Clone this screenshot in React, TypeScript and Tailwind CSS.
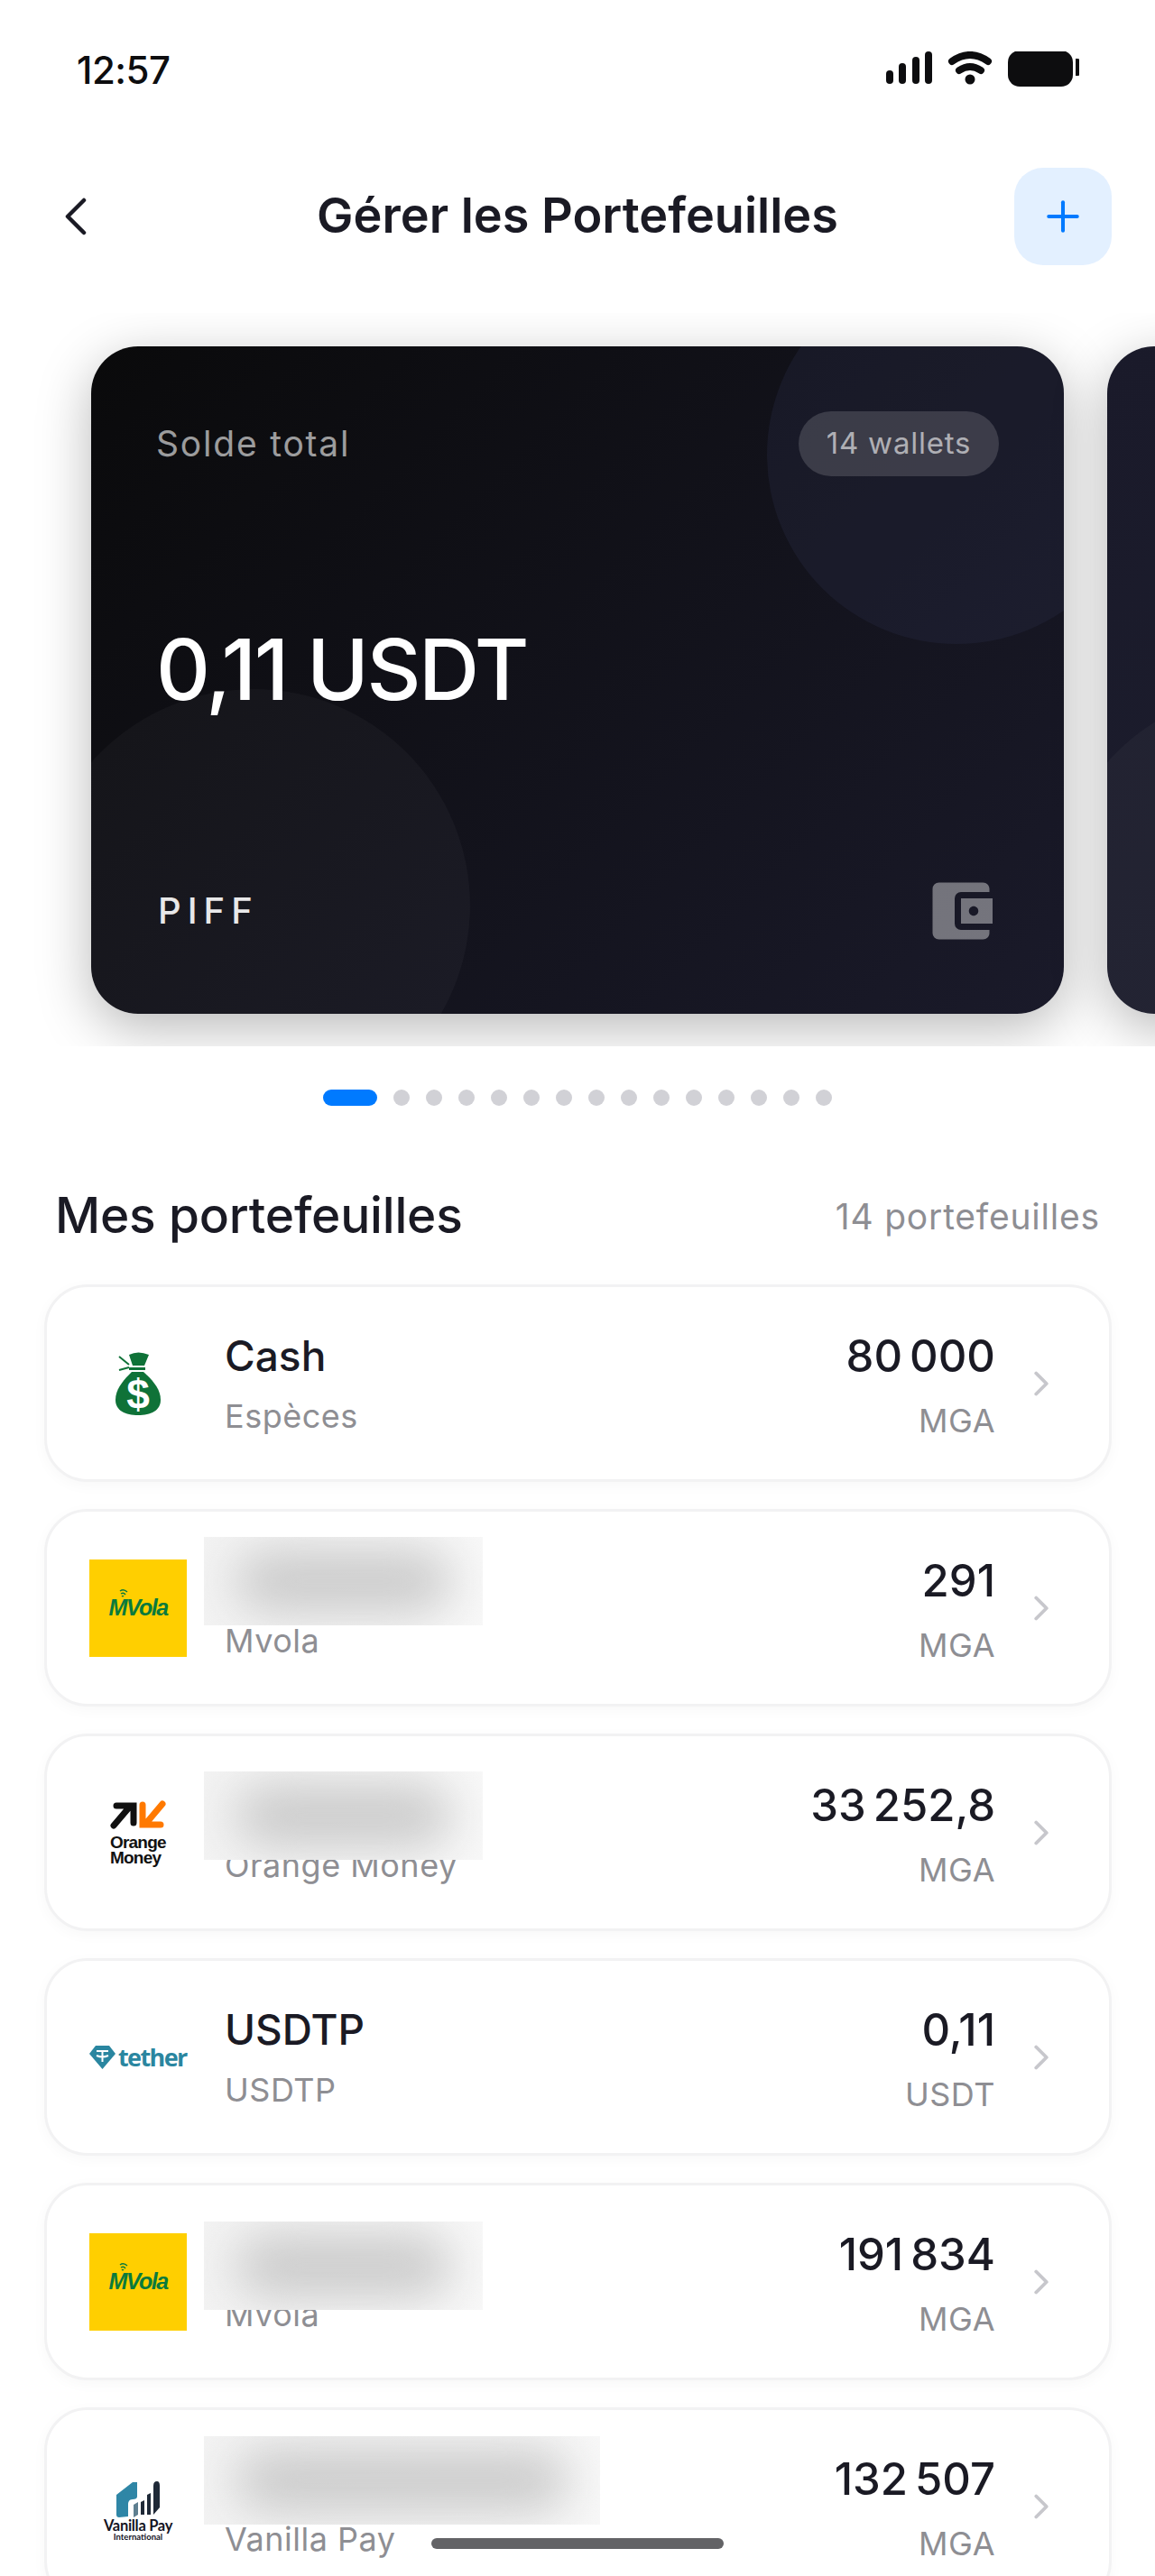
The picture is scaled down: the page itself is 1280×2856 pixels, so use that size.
import { ChevronLeft, ChevronRight, Plus } from "lucide-react";
import { MdAccountBalanceWallet } from "react-icons/md";
import type { ReactNode } from "react";

type Wallet = {
  name: string;
  type: string;
  amount: string;
  currency: string;
  logo: ReactNode;
  blur?: { top: string; width: string };
};

const CashLogo = () => (
  <svg width="108" height="108" viewBox="0 0 108 108">
    <path d="M44 22Q54 17 66 22L61 34H48Z" fill="#0f7238" />
    <rect x="44" y="36" width="18" height="3" fill="#0f7238" />
    <path d="M33 24L44 33M33 39L44 36" stroke="#0f7238" strokeWidth="2" />
    <path
      d="M47 41H60C70 50 79 60 79 72C79 84 68 89 54 89C40 89 29 84 29 72C29 60 38 50 47 41Z"
      fill="#0f7238"
    />
    <text
      x="54"
      y="82"
      textAnchor="middle"
      fill="#fff"
      fontSize="46"
      fontWeight="900"
      fontFamily="Liberation Sans, sans-serif"
    >
      $
    </text>
  </svg>
);

const MvolaLogo = () => (
  <div className="flex h-[108px] w-[108px] items-center justify-center bg-[#ffcf00]">
    <div className="relative font-['Liberation_Sans',sans-serif] text-[25px] font-bold italic leading-none tracking-[-1.5px] text-[#0a7a3c]">
      MVola
      <svg
        className="absolute left-[11px] top-[-10px]"
        width="16"
        height="12"
        viewBox="0 0 16 12"
        fill="none"
        stroke="#0a7a3c"
        strokeWidth="1.4"
      >
        <path d="M2 4Q6 1 10 5M3 7Q6 5 8 8M4 10Q5 9 6 10" />
      </svg>
    </div>
  </div>
);

const OrangeLogo = () => (
  <div className="flex h-[108px] w-[108px] flex-col items-center justify-center">
    <svg width="62" height="34" viewBox="0 0 62 34" className="mb-[5px]">
      <path
        d="M4 29L21 9M7 7H26V26"
        fill="none"
        stroke="#111"
        strokeWidth="7"
        strokeLinecap="round"
        strokeLinejoin="miter"
      />
      <path
        d="M58 5L42 24M36 6V28H56"
        fill="none"
        stroke="#ff7900"
        strokeWidth="7"
        strokeLinecap="round"
        strokeLinejoin="miter"
      />
    </svg>
    <div className="w-[62px] font-['Liberation_Sans',sans-serif] text-[19px] font-bold leading-[17px] tracking-[-0.8px] text-[#111]">
      Orange
      <br />
      Money
    </div>
  </div>
);

const TetherLogo = () => (
  <div className="flex h-[108px] w-[108px] items-center gap-[3px]">
    <svg width="29" height="26" viewBox="0 0 29 26" className="shrink-0">
      <path d="M7 0H22L29 9L14.500 26L0 9Z" fill="#2a86a0" />
      <path
        d="M8 6H21M14.500 6V18M8 11Q14.500 14 21 11"
        stroke="#fff"
        strokeWidth="2"
        fill="none"
      />
    </svg>
    <span className="font-['Open_Sans',sans-serif] text-[27px] font-bold leading-none tracking-[-1.6px] text-[#2a86a0]">
      tether
    </span>
  </div>
);

const VanillaLogo = () => (
  <div className="flex h-[108px] w-[108px] flex-col items-center justify-center pt-[10px]">
    <svg width="52" height="42" viewBox="0 0 52 42">
      <path d="M2 16L20 2H25V18C25 20 23 21 20 21C16 21 15 24 15 27V40L5 41C3 41 2 40 2 38Z" fill="#2f86a6" />
      <path d="M29 38V24L33 22V38ZM36 38V16L40 14V38Z" fill="#1f2937" />
      <path d="M43 38V6Q43 1 47 1Q50 1 50 6V30L43 38Z" fill="#1f2937" />
      <path d="M21 41V27L26 24V38Z" fill="#5e7f90" />
    </svg>
    <div className="mt-[1px] font-['Lato',sans-serif] text-[16.500px] font-bold leading-[15px] tracking-[-0.3px] text-[#14141f]">
      Vanilla Pay
    </div>
    <div className="font-['Lato',sans-serif] text-[9.500px] font-bold leading-[10px] text-[#14141f]">
      International
    </div>
  </div>
);

const wallets: Wallet[] = [
  { name: "Cash", type: "Espèces", amount: "80 000", currency: "MGA", logo: <CashLogo /> },
  {
    name: "",
    type: "Mvola",
    amount: "291",
    currency: "MGA",
    logo: <MvolaLogo />,
    blur: { top: "top-[28px]", width: "w-[309px]" },
  },
  {
    name: "",
    type: "Orange Money",
    amount: "33 252,8",
    currency: "MGA",
    logo: <OrangeLogo />,
    blur: { top: "top-[39px]", width: "w-[309px]" },
  },
  { name: "USDTP", type: "USDTP", amount: "0,11", currency: "USDT", logo: <TetherLogo /> },
  {
    name: "",
    type: "Mvola",
    amount: "191 834",
    currency: "MGA",
    logo: <MvolaLogo />,
    blur: { top: "top-[40px]", width: "w-[309px]" },
  },
  {
    name: "",
    type: "Vanilla Pay",
    amount: "132 507",
    currency: "MGA",
    logo: <VanillaLogo />,
    blur: { top: "top-[29px]", width: "w-[439px]" },
  },
];

const StatusIcons = () => (
  <div className="flex items-center">
    <svg width="214" height="40" viewBox="0 0 214 40" fill="#0d0d0f">
      <rect x="0" y="21" width="8" height="15" rx="4" />
      <rect x="14" y="13" width="8" height="23" rx="4" />
      <rect x="29" y="6" width="8" height="30" rx="4" />
      <rect x="43" y="0" width="8" height="36" rx="4" />
      <path
        d="M73 11Q93 -3 113 11M81 21Q93 13 105 21"
        fill="none"
        stroke="#0d0d0f"
        strokeWidth="8"
        strokeLinecap="round"
      />
      <circle cx="93" cy="31" r="5.500" />
      <rect x="135" y="-1" width="72" height="40" rx="13" />
      <path d="M210 8H212Q215 8 215 11V24Q215 27 212 27H210Z" />
    </svg>
  </div>
);

const BalanceCard = ({ second }: { second?: boolean }) => (
  <div
    className={`relative h-[740px] w-[1078px] shrink-0 overflow-hidden rounded-[52px] shadow-[0_16px_60px_rgba(0,0,0,0.28)] ${
      second
        ? "bg-[linear-gradient(135deg,#1a1a2a_0%,#1e2030_100%)]"
        : "bg-[linear-gradient(135deg,#0a0a0b_0%,#1a1a2a_100%)]"
    }`}
  >
    <div className="absolute right-[-91px] top-[-90px] h-[420px] w-[420px] rounded-full bg-[#2c2d48]/30" />
    <div className="absolute bottom-[-120px] left-[-60px] h-[480px] w-[480px] rounded-full bg-white/[0.03]" />
    {!second && (
      <div className="relative flex h-full flex-col justify-between p-[72px]">
        <div className="flex items-center justify-between">
          <span className="text-[39px] tracking-[1.8px] text-white/60">Solde total</span>
          <span className="flex h-[72px] w-[222px] items-center justify-center rounded-full bg-white/15 text-[33px] tracking-[0.8px] text-white/60">
            14 wallets
          </span>
        </div>
        <div className="mb-[12px] text-[93px] font-medium leading-none tracking-[-2.500px] text-white">
          0,11 USDT
        </div>
        <div className="flex items-center justify-between">
          <span className="ml-[2px] text-[40px] font-medium tracking-[7px] text-white/90">PIFF</span>
          <MdAccountBalanceWallet className="text-white/40" size={84} />
        </div>
      </div>
    )}
  </div>
);

const WalletRow = ({ wallet }: { wallet: Wallet }) => (
  <div className="relative box-border flex h-[219px] items-center rounded-[48px] border-[3px] border-[#f2f2f3] bg-white pl-[47px] pr-[52px] shadow-[0_4px_16px_rgba(0,0,0,0.03)]">
    <div className="h-[108px] w-[108px] shrink-0">{wallet.logo}</div>
    <div className="ml-[42px] flex min-w-0 flex-1 flex-col gap-[15px]">
      <div className="h-[58px] text-[46px] font-medium leading-[58px] text-[#1a1a24]">
        {wallet.name}
      </div>
      <div className="h-[46px] text-[36px] leading-[46px] tracking-[0.5px] text-[#8e8e93]">
        {wallet.type}
      </div>
    </div>
    <div className="flex flex-col items-end gap-[19px] pt-[6px]">
      <div className="h-[58px] text-[49px] font-medium leading-[58px] [word-spacing:-5px] text-[#1a1a24]">
        {wallet.amount}
      </div>
      <div className="h-[46px] text-[36px] leading-[46px] tracking-[0.5px] text-[#8e8e93]">
        {wallet.currency}
      </div>
    </div>
    <ChevronRight className="ml-[28px] text-[#c7c7cc]" size={46} strokeWidth={2} />
    {wallet.blur && (
      <div
        className={`absolute left-[174px] h-[98px] overflow-hidden bg-[linear-gradient(90deg,#f3f3f3,#f8f8f8)] ${wallet.blur.top} ${wallet.blur.width}`}
      >
        <div className="absolute inset-x-[34px] inset-y-[14px] rounded-full bg-[#cbcbcb] blur-[26px]" />
      </div>
    )}
  </div>
);

export default function App() {
  return (
    <div className="relative h-[2856px] w-[1280px] overflow-hidden bg-white font-['Inter',sans-serif]">
      <div className="flex h-[156px] items-center justify-between pb-[2px] pl-[85px] pr-[84px]">
        <span className="text-[42px] font-medium tracking-[-0.5px] text-[#0d0d0f]">12:57</span>
        <StatusIcons />
      </div>

      <div className="flex items-center justify-between px-[48px] pb-[53px] pt-[30px]">
        <div className="flex h-[108px] w-[108px] items-center justify-center">
          <ChevronLeft className="mr-[36px] text-[#1a1a24]" size={88} strokeWidth={1.5} />
        </div>
        <h1 className="pb-[3px] text-[54px] font-semibold text-[#1a1a24]">Gérer les Portefeuilles</h1>
        <div className="flex h-[108px] w-[108px] items-center justify-center rounded-[32px] bg-[#e3f0ff]">
          <Plus className="text-[#007aff]" size={54} strokeWidth={1.8} />
        </div>
      </div>

      <div className="flex h-[813px] gap-[48px] overflow-hidden pl-[101px] pt-[37px]">
        <BalanceCard />
        <BalanceCard second />
      </div>

      <div className="mt-[48px] flex h-[18px] items-center justify-center gap-[18px] pr-[1px]">
        <div className="h-[18px] w-[60px] rounded-full bg-[#007aff]" />
        {Array.from({ length: 14 }).map((_, i) => (
          <div key={i} className="h-[18px] w-[18px] rounded-full bg-[#d1d1d6]" />
        ))}
      </div>

      <div className="mt-[91px] flex h-[60px] items-center justify-between px-[61px]">
        <h2 className="text-[55px] font-medium tracking-[-0.2px] text-[#1a1a24]">Mes portefeuilles</h2>
        <span className="pt-[4px] text-[39px] tracking-[0.8px] text-[#8e8e93]">14 portefeuilles</span>
      </div>

      <div className="ml-[49px] mt-[47px] flex w-[1183px] flex-col gap-[30px]">
        {wallets.map((wallet, i) => (
          <WalletRow key={i} wallet={wallet} />
        ))}
      </div>

      <div className="absolute left-[478px] top-[2814px] h-[12px] w-[324px] rounded-full bg-[#636366]" />
    </div>
  );
}
